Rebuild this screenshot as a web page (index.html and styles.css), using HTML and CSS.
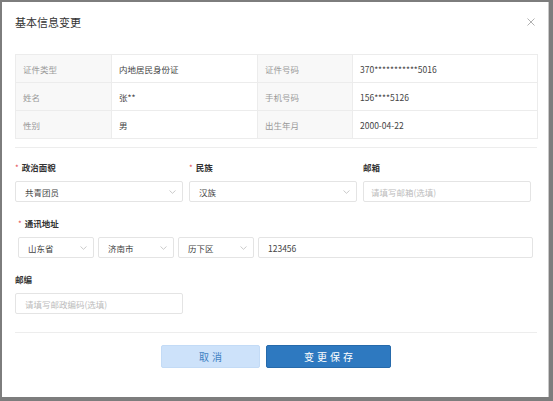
FILE: index.html
```
<!DOCTYPE html>
<html lang="zh-CN">
<head>
<meta charset="utf-8">
<title>基本信息变更</title>
<link rel="stylesheet" href="styles.css">
</head>
<body>
<div class="dialog">
  <div class="header">
    <div class="title">基本信息变更</div>
    <div class="close">
      <svg width="8" height="8" viewBox="0 0 8 8"><path d="M0.5 0.5L7.5 7.5M7.5 0.5L0.5 7.5" stroke="#a8a8a8" stroke-width="0.9" fill="none"/></svg>
    </div>
  </div>
  <table class="info">
    <tr>
      <td class="k">证件类型</td><td class="v">内地居民身份证</td>
      <td class="k">证件号码</td><td class="v">370***********5016</td>
    </tr>
    <tr>
      <td class="k">姓名</td><td class="v">张**</td>
      <td class="k">手机号码</td><td class="v">156****5126</td>
    </tr>
    <tr>
      <td class="k">性别</td><td class="v">男</td>
      <td class="k">出生年月</td><td class="v">2000-04-22</td>
    </tr>
  </table>
  <div class="divider first"></div>

  <div class="row three">
    <div class="field">
      <div class="label"><span class="req">*</span>政治面貌</div>
      <div class="select"><span>共青团员</span><svg class="chev" width="7" height="4" viewBox="0 0 7 4"><path d="M0.5 0.5L3.5 3.3L6.5 0.5" stroke="#bdbdbd" stroke-width="0.8" fill="none"/></svg></div>
    </div>
    <div class="field">
      <div class="label"><span class="req">*</span>民族</div>
      <div class="select"><span>汉族</span><svg class="chev" width="7" height="4" viewBox="0 0 7 4"><path d="M0.5 0.5L3.5 3.3L6.5 0.5" stroke="#bdbdbd" stroke-width="0.8" fill="none"/></svg></div>
    </div>
    <div class="field">
      <div class="label">邮箱</div>
      <div class="input ph email">请填写邮箱(选填)</div>
    </div>
  </div>

  <div class="row addr-block">
    <div class="label"><span class="req">*</span>通讯地址</div>
    <div class="addr">
      <div class="select small"><span>山东省</span><svg class="chev" width="7" height="4" viewBox="0 0 7 4"><path d="M0.5 0.5L3.5 3.3L6.5 0.5" stroke="#bdbdbd" stroke-width="0.8" fill="none"/></svg></div>
      <div class="select small"><span>济南市</span><svg class="chev" width="7" height="4" viewBox="0 0 7 4"><path d="M0.5 0.5L3.5 3.3L6.5 0.5" stroke="#bdbdbd" stroke-width="0.8" fill="none"/></svg></div>
      <div class="select small"><span>历下区</span><svg class="chev" width="7" height="4" viewBox="0 0 7 4"><path d="M0.5 0.5L3.5 3.3L6.5 0.5" stroke="#bdbdbd" stroke-width="0.8" fill="none"/></svg></div>
      <div class="input detail">123456</div>
    </div>
  </div>

  <div class="row">
    <div class="field">
      <div class="label">邮编</div>
      <div class="input ph">请填写邮政编码(选填)</div>
    </div>
  </div>

  <div class="divider second"></div>
  <div class="actions">
    <button class="btn cancel">取消</button>
    <button class="btn save">变更保存</button>
  </div>
</div>
</body>
</html>
```
FILE: styles.css
```
html, body {
  margin: 0;
  padding: 0;
}
body {
  width: 553px;
  height: 401px;
  background: #7d7d7d;
  font-family: "Noto Sans CJK SC", "Noto Sans", sans-serif;
  overflow: hidden;
}
.dialog {
  box-sizing: border-box;
  width: 546px;
  height: 395px;
  margin: 2px 0 0 2px;
  background: #fff;
  padding: 0 11px 0 13px;
  box-shadow: 1px 0 0 #c9c9c9;
}
.header {
  display: flex;
  justify-content: space-between;
  align-items: center;
  height: 16px;
  padding: 12px 0 24px 0;
}
.title {
  font-size: 11px;
  line-height: 16px;
  color: #333;
}
.close {
  width: 8px;
  height: 8px;
  margin-right: 2px;
  display: flex;
}
.info {
  border-collapse: collapse;
  width: 522px;
  table-layout: fixed;
}
.info td {
  height: 28px;
  border: 1px solid #ececec;
  padding: 0 7px;
  font-size: 8.5px;
  line-height: 12px;
  box-sizing: border-box;
}
.info td.k {
  background: #f8f8f8;
  color: #9a9a9a;
}
.info td.v {
  color: #444;
}
.info tr td:nth-child(1) { width: 96px; }
.info tr td:nth-child(2) { width: 146px; }
.info tr td:nth-child(3) { width: 95px; }
.info tr td:nth-child(4) { width: 185px; }
.divider {
  height: 1px;
  background: #ededed;
  width: 522px;
}
.divider.first {
  margin-top: 8px;
}
.row {
  display: flex;
  gap: 6px;
  margin-top: 15px;
}
.row.three {
  margin-top: 13px;
}
.field {
  display: flex;
  flex-direction: column;
  width: 168px;
}
.label {
  font-size: 8.5px;
  line-height: 13px;
  font-weight: bold;
  color: #333;
  margin-bottom: 7px;
}
.req {
  color: #e5484d;
  font-weight: normal;
  margin-right: 3px;
  font-size: 8px;
}
.select, .input {
  box-sizing: border-box;
  height: 21px;
  border: 1px solid #e4e4e4;
  border-radius: 2px;
  display: flex;
  align-items: center;
  justify-content: space-between;
  padding: 0 6px 0 9px;
  font-size: 8.5px;
  color: #444;
}
.input.ph {
  color: #bcbcbc;
}
.input.email {
  padding-left: 7px;
}
.addr-block {
  flex-direction: column;
  gap: 0;
  padding-left: 3px;
}
.addr {
  display: flex;
  gap: 4px;
}
.select.small {
  width: 76px;
}
.input.detail {
  width: 275px;
}
.chev {
  display: block;
}
.divider.second {
  margin-top: 18px;
}
.actions {
  display: flex;
  justify-content: center;
  gap: 6px;
  margin-top: 12px;
}
.btn {
  box-sizing: border-box;
  height: 23px;
  border-radius: 2px;
  font-family: "Noto Sans CJK SC", sans-serif;
  font-size: 10px;
  letter-spacing: 3px;
  padding: 0 0 0 3px;
  line-height: 21px;
  cursor: pointer;
}
.btn.cancel {
  width: 99px;
  background: #cde2fa;
  border: 1px solid #c3dbf6;
  color: #3f7fc2;
}
.btn.save {
  width: 125px;
  background: #2e79c0;
  border: 1px solid #266aab;
  color: #fff;
}
```
